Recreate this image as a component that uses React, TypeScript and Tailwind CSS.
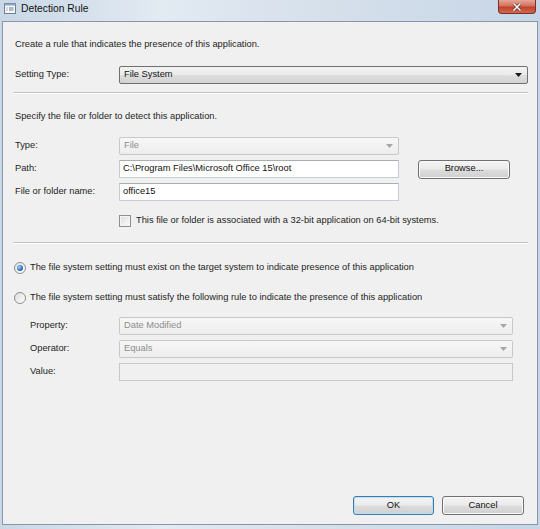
import React from 'react'

const label = 'w-[104px] shrink-0 text-[#1e1e1e]'

function DropArrow({ disabled }: { disabled?: boolean }) {
  return (
    <svg width="7" height="4" viewBox="0 0 7 4" className="shrink-0">
      <path d="M0 0h7L3.5 4z" fill={disabled ? '#a7a7a7' : '#1a1a1a'} />
    </svg>
  )
}

function DisabledSelect({ value, className }: { value: string; className: string }) {
  return (
    <div
      className={`${className} h-[18px] flex items-center justify-between pl-[4px] pr-[5px] rounded-[2px] border border-[#c5c9cc] bg-gradient-to-b from-[#f7f7f7] to-[#ededed] text-[#8d8d8d]`}
    >
      <span>{value}</span>
      <DropArrow disabled />
    </div>
  )
}

function TextBox({ value, className }: { value?: string; className: string }) {
  return (
    <div
      className={`${className} h-[18px] flex items-center pl-[3px] border border-[#c8ccd2] border-t-[#a9adb4] bg-white text-[#111]`}
    >
      {value}
    </div>
  )
}

function WinButton({ text, isDefault, className }: { text: string; isDefault?: boolean; className: string }) {
  return (
    <div
      className={`${className} h-[19px] flex items-center justify-center rounded-[3px] border ${
        isDefault ? 'border-[#3d7bad] shadow-[inset_0_0_0_1px_#b8e1f6]' : 'border-[#707070] shadow-[inset_0_0_0_1px_#fbfbfb]'
      } bg-[linear-gradient(#f3f3f3_0%,#ebebeb_48%,#dddddd_52%,#cfcfcf_100%)] text-[#111]`}
    >
      {text}
    </div>
  )
}

function Separator() {
  return <div className="-ml-[2px] h-[2px] border-t border-[#c4c4c4] border-b border-b-white" />
}

export default function App() {
  return (
    <div className="w-[540px] h-[529px] overflow-hidden bg-[linear-gradient(90deg,#c9d7e6_0%,#e2eaf2_30%,#d6e0eb_60%,#c6d6e7_100%)] font-['Liberation_Sans',Arial,sans-serif] text-[9.3px] leading-none">
      {/* title bar */}
      <div className="h-[21px] flex items-start">
        <svg width="12" height="11" viewBox="0 0 12 11" className="ml-[4px] mt-[3px]">
          <rect x="0.5" y="0.5" width="11" height="10" fill="#f4f7fb" stroke="#6d7f95" />
          <rect x="0.5" y="0.5" width="11" height="2" fill="#8fa6c2" />
          <path d="M2.5 5h1M5 5h4.5M2.5 7h1M5 7h4.5" stroke="#6d7f95" />
        </svg>
        <span className="ml-[5px] mt-[4px] text-[10.3px] text-[#111]">Detection Rule</span>
        <div className="ml-auto mr-[4px] w-[38px] h-[14px] flex items-center justify-center rounded-b-[4px] border border-t-0 border-[#7a2f26] bg-[linear-gradient(#e6a595_0%,#d5715d_45%,#c0432c_55%,#cf6a50_100%)]">
          <svg width="10" height="8" viewBox="0 0 10 8">
            <path d="M1.5 0.5l7 7M8.5 0.5l-7 7" stroke="#4a1a14" strokeWidth="2.6" />
            <path d="M1.5 0.5l7 7M8.5 0.5l-7 7" stroke="#ffffff" strokeWidth="1.6" />
          </svg>
        </div>
      </div>

      {/* client area */}
      <div className="mx-[2px] h-[504px] border border-[#8796a8] bg-[#f0f0f0] flex flex-col pt-[1px] pl-[12px] pr-[9px]">
        <div className="mt-[14px] h-[16px] flex items-center text-[#1e1e1e]">
          Create a rule that indicates the presence of this application.
        </div>

        <div className="mt-[13px] h-[18px] flex items-center">
          <span className={label}>Setting Type:</span>
          <div className="flex-1 h-[18px] flex items-center justify-between pl-[4px] pr-[5px] rounded-[2px] border border-[#707070] bg-[linear-gradient(#f2f2f2_0%,#ebebeb_48%,#dddddd_52%,#d2d2d2_100%)] text-[#111]">
            <span>File System</span>
            <DropArrow />
          </div>
        </div>

        <div className="mt-[8px]">
          <Separator />
        </div>

        <div className="mt-[15px] h-[16px] flex items-center text-[#1e1e1e]">
          Specify the file or folder to detect this application.
        </div>

        <div className="mt-[12px] h-[18px] flex items-center">
          <span className={label}>Type:</span>
          <DisabledSelect value="File" className="w-[280px]" />
        </div>

        <div className="mt-[5px] h-[18px] flex items-center">
          <span className={label}>Path:</span>
          <TextBox value="C:\Program Files\Microsoft Office 15\root" className="w-[280px]" />
          <WinButton text="Browse..." className="ml-[19px] w-[92px]" />
        </div>

        <div className="mt-[5px] h-[18px] flex items-center">
          <span className={label}>File or folder name:</span>
          <TextBox value="office15" className="w-[280px]" />
        </div>

        <div className="mt-[13px] h-[13px] flex items-center">
          <span className="w-[104px] shrink-0" />
          <div className="w-[12px] h-[12px] border border-[#8f8f8f] bg-[linear-gradient(135deg,#dcdcdc,#fdfdfd)] shadow-[inset_0_0_0_1px_#f4f4f4]" />
          <span className="ml-[5px] text-[#1e1e1e]">
            This file or folder is associated with a 32-bit application on 64-bit systems.
          </span>
        </div>

        <div className="mt-[15px]">
          <Separator />
        </div>

        <div className="mt-[17px] h-[14px] flex items-center -ml-[1px]">
          <div className="w-[12px] h-[12px] rounded-full border border-[#8e8f8f] bg-[linear-gradient(135deg,#e0e0e0,#ffffff)] flex items-center justify-center">
            <div className="w-[6px] h-[6px] rounded-full bg-[radial-gradient(circle_at_35%_35%,#a9d8f8,#2a6cb2_60%,#1a4f8f)]" />
          </div>
          <span className="ml-[4px] text-[#1e1e1e]">
            The file system setting must exist on the target system to indicate presence of this application
          </span>
        </div>

        <div className="mt-[16px] h-[14px] flex items-center -ml-[1px]">
          <div className="w-[12px] h-[12px] rounded-full border border-[#8e8f8f] bg-[linear-gradient(135deg,#dcdcdc,#ffffff)]" />
          <span className="ml-[4px] text-[#1e1e1e]">
            The file system setting must satisfy the following rule to indicate the presence of this application
          </span>
        </div>

        <div className="mt-[12px] h-[18px] flex items-center pl-[15px] pr-[15px]">
          <span className="w-[89px] shrink-0 text-[#1e1e1e]">Property:</span>
          <DisabledSelect value="Date Modified" className="flex-1" />
        </div>

        <div className="mt-[5px] h-[18px] flex items-center pl-[15px] pr-[15px]">
          <span className="w-[89px] shrink-0 text-[#1e1e1e]">Operator:</span>
          <DisabledSelect value="Equals" className="flex-1" />
        </div>

        <div className="mt-[5px] h-[18px] flex items-center pl-[15px] pr-[15px]">
          <span className="w-[89px] shrink-0 text-[#1e1e1e]">Value:</span>
          <div className="flex-1 h-[18px] border border-[#c5c9cc] bg-[#f0f0f0]" />
        </div>

        <div className="mt-auto mb-[9px] mr-[4px] flex justify-end gap-[8px]">
          <WinButton text="OK" isDefault className="w-[81px]" />
          <WinButton text="Cancel" className="w-[82px]" />
        </div>
      </div>
    </div>
  )
}
